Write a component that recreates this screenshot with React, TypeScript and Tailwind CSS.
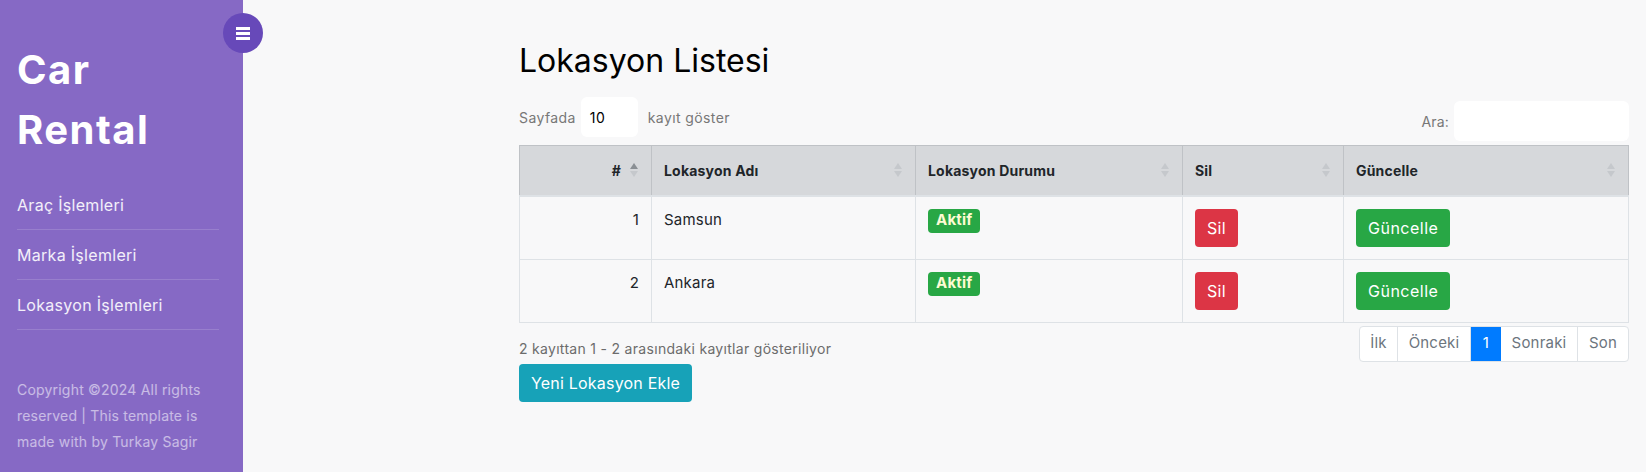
import React from 'react'

const rows = [
  { id: 1, name: 'Samsun' },
  { id: 2, name: 'Ankara' },
]

function SortIcon({ active }: { active?: boolean }) {
  return (
    <span className="absolute right-[13px] top-1/2 -translate-y-1/2 flex flex-col gap-[2px]">
      <svg width="8" height="6" viewBox="0 0 8 6">
        <path d="M4 0 L8 6 L0 6 Z" fill={active ? '#8a8f94' : '#c5c8cc'} />
      </svg>
      <svg width="8" height="6" viewBox="0 0 8 6">
        <path d="M0 0 L8 0 L4 6 Z" fill="#c5c8cc" />
      </svg>
    </span>
  )
}

function Sidebar() {
  return (
    <nav className="relative w-[243px] shrink-0 bg-[#8669c5] px-[17px] pt-[40px] text-white">
      {/* Toggle */}
      <button className="absolute right-[-20px] top-[13px] flex h-10 w-10 items-center justify-center rounded-full bg-[#6749b9]">
        <span className="flex flex-col gap-[2px]">
          <span className="block h-[3px] w-[14px] bg-white" />
          <span className="block h-[3px] w-[14px] bg-white" />
          <span className="block h-[3px] w-[14px] bg-white" />
        </span>
      </button>

      <h1 className="mb-[20px] text-[40px] font-bold leading-[60px] tracking-[1.5px]">
        Car
        <br />
        Rental
      </h1>

      <ul className="w-[202px]">
        {['Araç İşlemleri', 'Marka İşlemleri', 'Lokasyon İşlemleri'].map((item) => (
          <li
            key={item}
            className="flex h-[50px] items-center border-b border-white/15 text-[16px] tracking-[0.3px] text-white/90"
          >
            {item}
          </li>
        ))}
      </ul>

      <p className="mt-[47px] pb-[18px] text-[14px] leading-[26px] text-white/55">
        Copyright ©2024 All rights reserved | This template is made with by Turkay Sagir
      </p>
    </nav>
  )
}

export default function App() {
  return (
    <div className="flex min-h-[472px] w-full font-['Inter',sans-serif] text-[15px] tracking-[0.2px] text-[#212529]">
      <Sidebar />

      <main className="flex-1 bg-[#f8f8f9] pl-[276px] pr-[17px] pt-[40px]">
        <h2 className="mb-[16px] text-[32px] font-normal leading-[41px] tracking-normal text-black">
          Lokasyon Listesi
        </h2>

        {/* Controls */}
        <div className="flex items-start justify-between">
          <label className="flex items-center text-[14px] tracking-[0.4px] text-[#777]">
            Sayfada
            <span className="mx-[10px] ml-[5px] flex h-10 w-[57px] items-center rounded-md bg-white pl-[9px] text-black">
              10
            </span>
            kayıt göster
          </label>
          <label className="mt-1 flex items-center text-[14px] text-[#777]">
            Ara:
            <span className="ml-[5px] block h-10 w-[175px] rounded-md bg-white" />
          </label>
        </div>

        {/* Table */}
        <table className="mt-1 w-[1110px] border-collapse border border-[#dee2e6]">
          <thead>
            <tr className="h-[50px] bg-[#d6d8db] text-left text-[14px] font-bold">
              <th className="relative w-[132px] border border-[#bfc2c6] border-b-2 border-b-[#dee2e6] pr-[30px] text-right">
                #
                <SortIcon active />
              </th>
              <th className="relative w-[264px] border border-[#bfc2c6] border-b-2 border-b-[#dee2e6] px-3">
                Lokasyon Adı
                <SortIcon />
              </th>
              <th className="relative w-[267px] border border-[#bfc2c6] border-b-2 border-b-[#dee2e6] px-3">
                Lokasyon Durumu
                <SortIcon />
              </th>
              <th className="relative w-[161px] border border-[#bfc2c6] border-b-2 border-b-[#dee2e6] px-3">
                Sil
                <SortIcon />
              </th>
              <th className="relative border border-[#bfc2c6] border-b-2 border-b-[#dee2e6] px-3">
                Güncelle
                <SortIcon />
              </th>
            </tr>
          </thead>
          <tbody>
            {rows.map((row) => (
              <tr key={row.id} className="h-[63px] align-top text-[15px]">
                <td className="border border-[#dee2e6] px-3 py-3 text-right">{row.id}</td>
                <td className="border border-[#dee2e6] px-3 py-3">{row.name}</td>
                <td className="border border-[#dee2e6] px-3 py-3">
                  <span className="inline-flex h-6 items-center rounded-[4px] bg-[#28a745] px-2 text-[15px] font-bold text-[#fdfbd3]">
                    Aktif
                  </span>
                </td>
                <td className="border border-[#dee2e6] px-3 py-3">
                  <button className="h-[38px] rounded-[4px] bg-[#dc3545] px-3 text-[16px] tracking-[0.3px] text-white">
                    Sil
                  </button>
                </td>
                <td className="border border-[#dee2e6] px-3 py-3">
                  <button className="h-[38px] rounded-[4px] bg-[#28a745] px-3 text-[16px] tracking-[0.5px] text-white">
                    Güncelle
                  </button>
                </td>
              </tr>
            ))}
          </tbody>
        </table>

        {/* Footer */}
        <div className="flex w-[1110px] items-start justify-between">
          <div className="pt-[14px]">
            <p className="text-[14px] leading-6 tracking-[0.3px] text-[#6c6c6c]">
              2 kayıttan 1 - 2 arasındaki kayıtlar gösteriliyor
            </p>
            <button className="mt-[3px] h-[38px] rounded-[4px] bg-[#17a2b8] px-3 text-[16px] tracking-[0.2px] text-white">
              Yeni Lokasyon Ekle
            </button>
          </div>
          <ul className="mt-[3px] flex h-9 overflow-hidden rounded-[4px] border border-[#dee2e6] bg-white text-[15px] text-[#6c757d]">
            <li className="flex w-[38px] items-center justify-center border-r border-[#dee2e6]">İlk</li>
            <li className="flex w-[73px] items-center justify-center border-r border-[#dee2e6]">Önceki</li>
            <li className="flex w-[30px] items-center justify-center bg-[#007bff] text-white">1</li>
            <li className="flex w-[77px] items-center justify-center border-r border-[#dee2e6]">Sonraki</li>
            <li className="flex w-[50px] items-center justify-center">Son</li>
          </ul>
        </div>
      </main>
    </div>
  )
}
